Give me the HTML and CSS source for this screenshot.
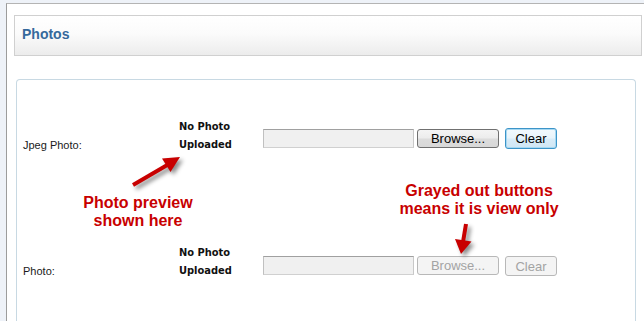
FILE: index.html
```html
<!DOCTYPE html>
<html>
<head>
<meta charset="utf-8">
<link rel="stylesheet" href="styles.css">
</head>
<body>
<div class="frame">
  <div class="header">Photos</div>
  <div class="panel">
    <div class="row row-first">
      <div class="label">Jpeg Photo:</div>
      <div class="preview">No Photo<br>Uploaded</div>
      <div class="field"></div>
      <button class="btn browse">Browse...</button>
      <button class="btn clear focused">Clear</button>
    </div>
    <div class="row row-second">
      <div class="label">Photo:</div>
      <div class="preview">No Photo<br>Uploaded</div>
      <div class="field"></div>
      <button class="btn browse" disabled>Browse...</button>
      <button class="btn clear" disabled>Clear</button>
    </div>

    <div class="note note-preview">Photo preview<br>shown here</div>
    <div class="note note-gray">Grayed out buttons<br>means it is view only</div>

    <svg class="arrow arrow-one" width="70" height="47" viewBox="125 148 70 47">
      <line x1="133" y1="185" x2="169" y2="164" stroke="#c80000" stroke-width="4"/>
      <polygon points="180,157 170.5,172 162,158.5" fill="#c80000"/>
    </svg>
    <svg class="arrow arrow-two" width="40" height="44" viewBox="445 218 40 44">
      <line x1="466" y1="224" x2="463" y2="242" stroke="#c80000" stroke-width="4"/>
      <polygon points="461,254 455,239 471.5,241.5" fill="#c80000"/>
    </svg>
  </div>
</div>
</body>
</html>
```
FILE: styles.css
```css
html, body {
  margin: 0;
  padding: 0;
}
body {
  background: #eef2f8;
  width: 644px;
  height: 321px;
  overflow: hidden;
  font-family: "Liberation Sans", Arial, sans-serif;
}
.frame {
  margin: 3px 0 0 6px;
  height: 318px;
  box-sizing: border-box;
  border-left: 1px solid #9c9c9c;
  border-top: 1px solid #b4b4b4;
  background: #ffffff;
  overflow: hidden;
}
.header {
  margin: 11px 2px 0 7px;
  height: 41px;
  box-sizing: border-box;
  border: 1px solid #d0d0d0;
  background: linear-gradient(#ffffff 0%, #fbfbfb 45%, #ececec 100%);
  padding: 10px 0 0 7px;
  font-size: 14px;
  line-height: 16px;
  font-weight: bold;
  color: #35699c;
}
.panel {
  position: relative;
  margin: 23px 8px 0 9px;
  height: 260px;
  border: 1px solid #c8d9e3;
  border-bottom: none;
  border-radius: 4px 4px 0 0;
  padding: 38px 0 0 6px;
  box-sizing: border-box;
}
.row {
  display: flex;
  align-items: flex-start;
}
.row-second {
  margin-top: 90px;
}
.label {
  width: 156px;
  font-size: 11px;
  line-height: 13px;
  color: #1a1a1a;
  margin-top: 21px;
}
.preview {
  width: 84px;
  font-family: "DejaVu Sans Condensed", "DejaVu Sans", sans-serif;
  font-stretch: condensed;
  font-weight: bold;
  font-size: 11px;
  line-height: 18px;
  color: #111;
}
.field {
  width: 151px;
  height: 19px;
  box-sizing: border-box;
  margin-top: 11px;
  background: #f0f0f0;
  border: 1px solid #a9a9a9;
  border-color: #a0a0a0 #c8c8c8 #d0d0d0 #c0c0c0;
}
.row-second .field {
  margin-top: 12px;
}
.btn {
  font-family: "Liberation Sans", Arial, sans-serif;
  font-size: 13px;
  line-height: 15px;
  padding: 0;
  margin: 0;
  color: #000;
  box-sizing: border-box;
  border: 1px solid #707070;
  border-radius: 3px;
  background: linear-gradient(#f4f4f4 0%, #ececec 48%, #dcdcdc 52%, #d8d8d8 100%);
}
.browse {
  width: 82px;
  height: 19px;
  margin: 11px 0 0 3px;
}
.clear {
  width: 52px;
  height: 21px;
  margin: 10px 0 0 6px;
}
.focused {
  border-color: #3c94c8;
  box-shadow: inset 0 0 0 1px #a6d8f2;
  background: linear-gradient(#f2f9fd 0%, #e8f4fb 48%, #d8ecf8 52%, #d0e6f4 100%);
}
.btn:disabled {
  color: #a3a3a3;
  border-color: #b8b8b8;
  background: #f4f4f4;
}
.row-second .browse {
  margin-top: 12px;
}
.row-second .clear {
  margin-top: 12px;
  height: 20px;
}
.note {
  position: absolute;
  text-align: center;
  font-size: 16px;
  line-height: 18px;
  font-weight: bold;
  color: #c80000;
}
.note-preview {
  left: 41px;
  top: 114px;
  width: 160px;
}
.note-gray {
  left: 362px;
  top: 102px;
  width: 200px;
}
.arrow {
  position: absolute;
  overflow: visible;
  filter: drop-shadow(3px 3px 2px rgba(0, 0, 0, 0.45));
}
.arrow-one {
  left: 108px;
  top: 68px;
}
.arrow-two {
  left: 428px;
  top: 138px;
}
```
